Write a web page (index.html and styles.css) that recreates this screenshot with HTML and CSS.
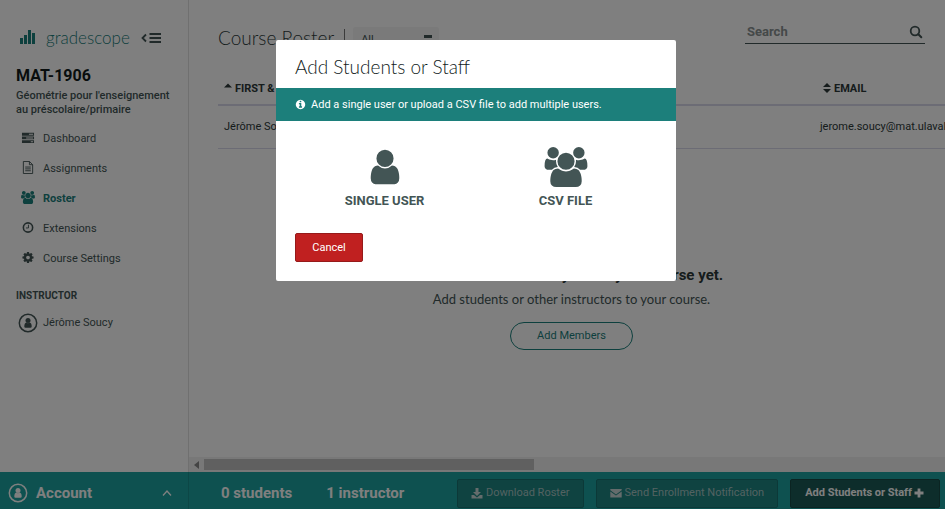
FILE: index.html
```html
<!DOCTYPE html>
<html lang="en">
<head>
<meta charset="utf-8">
<title>Course Roster</title>
<link rel="stylesheet" href="styles.css">
</head>
<body>
<svg class="defs" aria-hidden="true">
  <symbol id="user" viewBox="0 0 1792 1792"><path d="M1536 1399q0 109-62.500 187t-150.500 78h-854q-88 0-150.500-78t-62.500-187q0-85 8.500-160.500t31.500-152 58.500-131 94-89 134.500-34.500q131 128 313 128t313-128q76 0 134.500 34.500t94 89 58.500 131 31.500 152 8.500 160.500zm-256-887q0 159-112.500 271.500t-271.500 112.500-271.500-112.500-112.500-271.500 112.500-271.500 271.500-112.500 271.500 112.500 112.500 271.500z"/></symbol>
  <symbol id="users" viewBox="0 0 1920 1792"><path d="M593 896q-162 5-265 128h-134q-82 0-138-40.500t-56-118.500q0-353 124-353 6 0 43.500 21t97.500 42.500 119 21.500q67 0 133-23-5 37-5 66 0 139 81 256zm1071 637q0 120-73 189.500t-194 69.500h-874q-121 0-194-69.500t-73-189.500q0-53 3.500-103.500t14-109 26.500-108.500 43-97.500 62-81 85.500-53.500 111.500-20q10 0 43 21.500t73 48 107 48 135 21.500 135-21.500 107-48 73-48 43-21.500q61 0 111.500 20t85.500 53.500 62 81 43 97.500 26.500 108.500 14 109 3.500 103.500zm-1024-1277q0 106-75 181t-181 75-181-75-75-181 75-181 181-75 181 75 75 181zm704 384q0 159-112.500 271.500t-271.500 112.500-271.500-112.500-112.500-271.500 112.500-271.500 271.500-112.500 271.500 112.500 112.500 271.500zm576 225q0 78-56 118.500t-138 40.500h-134q-103-123-265-128 81-117 81-256 0-29-5-66 66 23 133 23 59 0 119-21.500t97.500-42.500 43.500-21q124 0 124 353zm-128-609q0 106-75 181t-181 75-181-75-75-181 75-181 181-75 181 75 75 181z"/></symbol>
  <symbol id="avatar" viewBox="0 0 20 20"><circle cx="10" cy="10" r="8.700" fill="none" stroke="currentColor" stroke-width="1.500"/><circle cx="10" cy="7.500" r="2.500"/><path d="M6.300 13.500q0-3.500 2-4 1.700 1.300 3.400 0 2 .5 2 4 0 1.300-1.200 1.300h-5q-1.200 0-1.200-1.300z"/></symbol>
</svg>

<div class="app">
  <aside class="sidebar">
    <div class="brand">
      <svg class="brand-mark" viewBox="0 0 15 14"><path d="M0 8h3v6H0zM4 5h3v9H4zM8 0h3v14H8zM12 3h3v11h-3z"/></svg>
      <a class="brand-name" href="#">gradescope</a>
      <button class="collapse" type="button" aria-label="Collapse sidebar">
        <svg viewBox="0 0 20 10"><path d="M5 1.500 1.500 5 5 8.500" fill="none" stroke="currentColor" stroke-width="1.800"/><path d="M8.500 0H20v2H8.500zM8.500 4H20v2H8.500zM8.500 8H20v2H8.500z"/></svg>
      </button>
    </div>
    <h2 class="course-code">MAT-1906</h2>
    <p class="course-name">Géométrie pour l'enseignement au préscolaire/primaire</p>
    <nav class="nav">
      <a href="#"><svg viewBox="0 0 14 14"><path fill-rule="evenodd" d="M.5 2h13v3H.5zM.5 6h13v3H.5zM.5 10h13v3H.5zM8 3v1h4.500V3zM5 7v1h7.500V7zM10 11v1h2.500v-1z"/></svg>Dashboard</a>
      <a href="#"><svg viewBox="0 0 14 14"><path fill="none" stroke="currentColor" d="M2 .5h6.500l3.500 3.500v9.500H2zM8.500.5V4H12M4 6.500h6M4 8.500h6M4 10.500h6"/></svg>Assignments</a>
      <a class="current" href="#"><svg><use href="#users"/></svg>Roster</a>
      <a href="#"><svg viewBox="0 0 14 14"><g fill="none" stroke="currentColor"><circle cx="7" cy="7" r="5" stroke-width="1.700"/><path d="M7.500 4v3.500H4.800"/></g></svg>Extensions</a>
      <a href="#"><svg viewBox="0 0 1792 1792"><path d="M1152 896q0-106-75-181t-181-75-181 75-75 181 75 181 181 75 181-75 75-181zm512-109v222q0 12-8 23t-20 13l-185 28q-19 54-39 91 35 50 107 138 10 12 10 25t-9 23q-27 37-99 108t-94 71q-12 0-26-9l-138-108q-44 23-91 38-16 136-29 186-7 28-36 28h-222q-14 0-24.500-8.500t-11.500-21.500l-28-184q-49-16-90-37l-141 107q-10 9-25 9-14 0-25-11-126-114-165-168-7-10-7-23 0-12 8-23 15-21 51-66.500t54-70.500q-27-50-41-99l-183-27q-13-2-21-12.500t-8-23.500v-222q0-12 8-23t19-13l186-28q14-46 39-92-40-57-107-138-10-12-10-24 0-10 9-23 26-36 98.500-107.500t94.500-71.500q13 0 26 10l138 107q44-23 91-38 16-136 29-186 7-28 36-28h222q14 0 24.500 8.500t11.500 21.500l28 184q49 16 90 37l142-107q9-9 24-9 13 0 25 10 129 119 165 170 7 8 7 22 0 12-8 23-15 21-51 66.500t-54 70.500q26 50 41 98l183 28q13 2 21 12.500t8 23.500z"/></svg>Course Settings</a>
    </nav>
    <h3 class="role">Instructor</h3>
    <p class="person"><svg><use href="#avatar"/></svg>Jérôme Soucy</p>
  </aside>

  <main class="main">
    <header class="page-head">
      <h1>Course Roster</h1>
      <span class="divider"></span>
      <select class="filter" aria-label="Filter by role"><option>All</option></select>
      <label class="search">
        <input type="text" placeholder="Search" aria-label="Search">
        <svg viewBox="0 0 14 14"><circle cx="6" cy="6" r="4.300" fill="none" stroke="currentColor" stroke-width="1.800"/><path d="m9.300 9.300 3 3" stroke="currentColor" stroke-width="2" stroke-linecap="round"/></svg>
      </label>
    </header>
    <div class="table-wrap">
      <table class="roster">
        <thead><tr>
          <th class="col-name"><svg viewBox="0 0 8 12"><path d="M0 5.500 4 1.500l4 4z"/></svg>First &amp; Last Name</th>
          <th class="col-email"><svg viewBox="0 0 8 12"><path d="M0 5 4 1l4 4zM0 7l4 4 4-4z"/></svg>Email</th>
        </tr></thead>
        <tbody><tr><td>Jérôme Soucy</td><td class="email">jerome.soucy@mat.ulaval.ca</td></tr></tbody>
      </table>
    </div>
    <section class="empty">
      <h2>You haven't added anyone to your course yet.</h2>
      <p>Add students or other instructors to your course.</p>
      <button type="button">Add Members</button>
    </section>
    <div class="scrollbar"><svg viewBox="0 0 5 8"><path d="M5 0v8L0 4z"/></svg><span class="thumb"></span></div>
  </main>

  <button class="account" type="button"><svg class="face"><use href="#avatar"/></svg><span>Account</span><svg class="chevron" viewBox="0 0 10 6"><path d="m1 5.500 4-4.500 4 4.500" fill="none" stroke="currentColor" stroke-width="1.300"/></svg></button>
  <footer class="actions">
    <span class="count">0 students</span>
    <span class="count">1 instructor</span>
    <button class="btn first" type="button"><svg viewBox="0 0 12 12"><path d="M4.500 1h3v4H10L6 9 2 5h2.500z"/><path d="M.5 8H3l3 2.500L9 8h2.500v3.500H.5z"/></svg>Download Roster</button>
    <button class="btn" type="button"><svg viewBox="0 0 12 12"><path d="M.3 2h11.400v1.300L6 7.500.3 3.300z"/><path d="m.3 4.600 5.700 4 5.700-4v6H.3z"/></svg>Send Enrollment Notification</button>
    <button class="btn primary" type="button">Add Students or Staff<svg viewBox="0 0 12 12"><path d="M4.600 1.500h2.800v3.100h3.100v2.800H7.400v3.100H4.600V7.400H1.500V4.600h3.100z"/></svg></button>
  </footer>
</div>

<div class="overlay">
  <section class="modal" role="dialog" aria-modal="true" aria-labelledby="modal-title">
    <h2 id="modal-title">Add Students or Staff</h2>
    <p class="info"><svg viewBox="0 0 1792 1792"><path d="M1152 1376v-160q0-14-9-23t-23-9h-96v-512q0-14-9-23t-23-9h-320q-14 0-23 9t-9 23v160q0 14 9 23t23 9h96v320h-96q-14 0-23 9t-9 23v160q0 14 9 23t23 9h448q14 0 23-9t9-23zm-128-896v-160q0-14-9-23t-23-9h-192q-14 0-23 9t-9 23v160q0 14 9 23t23 9h192q14 0 23-9t9-23zm640 416q0 209-103 385.500t-279.500 279.500-385.500 103-385.500-103-279.500-279.500-103-385.500 103-385.500 279.500-279.500 385.500-103 385.500 103 279.500 279.500 103 385.500z"/></svg>Add a single user or upload a CSV file to add multiple users.</p>
    <div class="choices">
      <button type="button"><svg><use href="#user"/></svg>SINGLE USER</button>
      <button type="button"><svg><use href="#users"/></svg>CSV FILE</button>
    </div>
    <button class="cancel" type="button">Cancel</button>
  </section>
</div>
</body>
</html>
```
FILE: styles.css
```css
* { box-sizing: border-box; }
body { margin: 0; font: 11px/14px Roboto, "Liberation Sans", sans-serif; color: #435555; background: #fff; }
h1, h2, h3, p { margin: 0; }
button, input, select { font: inherit; color: inherit; border: 0; background: none; padding: 0; }
a { color: inherit; text-decoration: none; }
svg { fill: currentColor; flex: none; }
.defs { display: none; }

.app { display: grid; grid-template-columns: 189px minmax(0, 1fr); grid-template-rows: minmax(0, 1fr) 37px; height: 100vh; overflow: hidden; }

.sidebar { border-right: 1px solid #e0e0e0; padding: 27px 12px 0 16px; }
.brand { display: flex; align-items: center; height: 22px; color: #1b807c; }
.brand-mark { width: 15px; height: 14px; margin: 0 11px 2px 4px; }
.brand-name { font: 300 17px/22px Lato, sans-serif; width: 95px; }
.collapse { color: #435555; height: 22px; }
.collapse svg { width: 20px; height: 10px; display: block; }
.course-code { font-size: 16px; line-height: 20px; font-weight: 700; color: #111b1b; margin: 17px 0 3px; }
.course-name { font-weight: 500; }
.nav { margin-top: 7px; }
.nav a { display: flex; align-items: center; height: 30px; }
.nav svg { width: 14px; height: 13px; margin: 0 8px 3px 5px; }
.nav .current { color: #1b807c; font-weight: 700; }
.role { font-size: 10px; line-height: 14px; font-weight: 700; text-transform: uppercase; margin-top: 15px; }
.person { display: flex; align-items: center; margin-top: 10px; }
.person svg { width: 20px; height: 20px; margin: 0 5px 0 2px; }

.main { display: flex; flex-direction: column; }
.page-head { display: flex; align-items: center; padding: 20px 20px 0 29px; height: 56px; }
.page-head h1 { font: 300 19px/24px Lato, sans-serif; color: #2d3b3b; }
.divider { width: 1px; height: 18px; background: #777; margin: 0 8px 0 10px; }
.filter { appearance: none; width: 86px; height: 22px; border-radius: 3px; padding: 4px 8px 0; background: linear-gradient(#435555, #435555) 71px 8px / 8px 3px no-repeat #f4f4f4; }
.search { display: flex; align-items: center; justify-content: space-between; width: 180px; height: 24px; margin-left: auto; margin-bottom: 12px; padding: 0 2px; border-bottom: 1px solid #435555; }
.search input { width: 140px; font-size: 13px; font-weight: 700; }
.search input::placeholder { color: #8a9292; opacity: 1; }
.search svg { width: 14px; height: 14px; }

.table-wrap { margin: 15px 0 0 29px; overflow: hidden; }
.roster { width: 120%; table-layout: fixed; border-spacing: 0; text-align: left; color: #2c3838; }
.roster th { height: 35px; padding: 2px 6px 0; text-transform: uppercase; font-weight: 700; border-bottom: 2px solid #d8d8ea; }
.roster th svg { width: 8px; height: 12px; margin-right: 3px; vertical-align: -2px; }
.roster td { height: 43px; padding: 0 6px; border-bottom: 1px solid #d8d8ea; }
.roster .col-name { width: 69%; }
.roster .col-email { padding-left: 3px; }
.roster td.email { padding: 0; }

.empty { padding: 116px 20px 0 29px; text-align: center; }
.empty h2 { font-size: 15px; line-height: 20px; color: #2c3838; }
.empty p { font-family: Lato, sans-serif; font-size: 13px; margin-top: 7px; }
.empty button { margin-top: 16px; height: 28px; padding: 0 26px; border: 1px solid #1b807c; border-radius: 14px; color: #1b807c; }

.scrollbar { display: flex; align-items: center; height: 15px; margin-top: auto; padding-left: 5px; background: #f1f1f1; color: #888; }
.scrollbar svg { width: 5px; height: 8px; }
.thumb { width: 44%; height: 11px; margin-left: 5px; background: #c1c1c1; }

.account, .actions { display: flex; align-items: center; background: #1ca3a0; color: #fff; }
.account { padding: 5px 16px 0 8px; font-size: 15px; font-weight: 700; border-right: 1px solid #188f8c; text-align: left; }
.account .face { width: 20px; height: 20px; margin-right: 8px; }
.account .chevron { width: 10px; height: 6px; margin-left: auto; }
.actions { padding: 5px 5px 0 32px; }
.count { font-size: 15px; font-weight: 700; margin-right: 34px; white-space: nowrap; }
.btn { display: flex; align-items: center; justify-content: center; height: 29px; padding: 0 13px; margin-left: 12px; border: 1px solid #187370; border-radius: 2px; background: #1e8683; color: #a6c4c3; white-space: nowrap; }
.btn.first { margin-left: auto; }
.btn svg { width: 12px; height: 12px; margin-right: 3px; color: #c8d8d8; }
.btn.primary { padding: 0 14px; background: #1b5b56; border-color: #164844; color: #fff; font-weight: 700; }
.btn.primary svg { margin: 0 0 0 1px; color: #fff; }

.overlay { position: fixed; inset: 0; display: flex; align-items: flex-start; justify-content: center; padding: 40px 0 0 7px; background: rgba(0, 0, 0, .5); }
.modal { width: 400px; background: #fff; border-radius: 2px; padding-bottom: 19px; }
.modal h2 { font: 300 19px/24px Lato, sans-serif; color: #111b1b; padding: 15px 19px 9px; }
.info { display: flex; align-items: center; height: 33px; padding: 0 19px; background: #1c7f7b; color: #fff; }
.info svg { width: 11px; height: 11px; margin-right: 5px; }
.choices { display: grid; grid-template-columns: 1fr 1fr; padding: 26px 20px 25px 18px; }
.choices button { display: flex; flex-direction: column; align-items: center; font-size: 13px; font-weight: 700; color: #435555; }
.choices svg { width: 44px; height: 40px; margin-bottom: 7px; }
.cancel { display: block; width: 68px; height: 29px; margin-left: 19px; background: #c02020; border: 1px solid #961a1a; border-radius: 2px; color: #fff; }
```
